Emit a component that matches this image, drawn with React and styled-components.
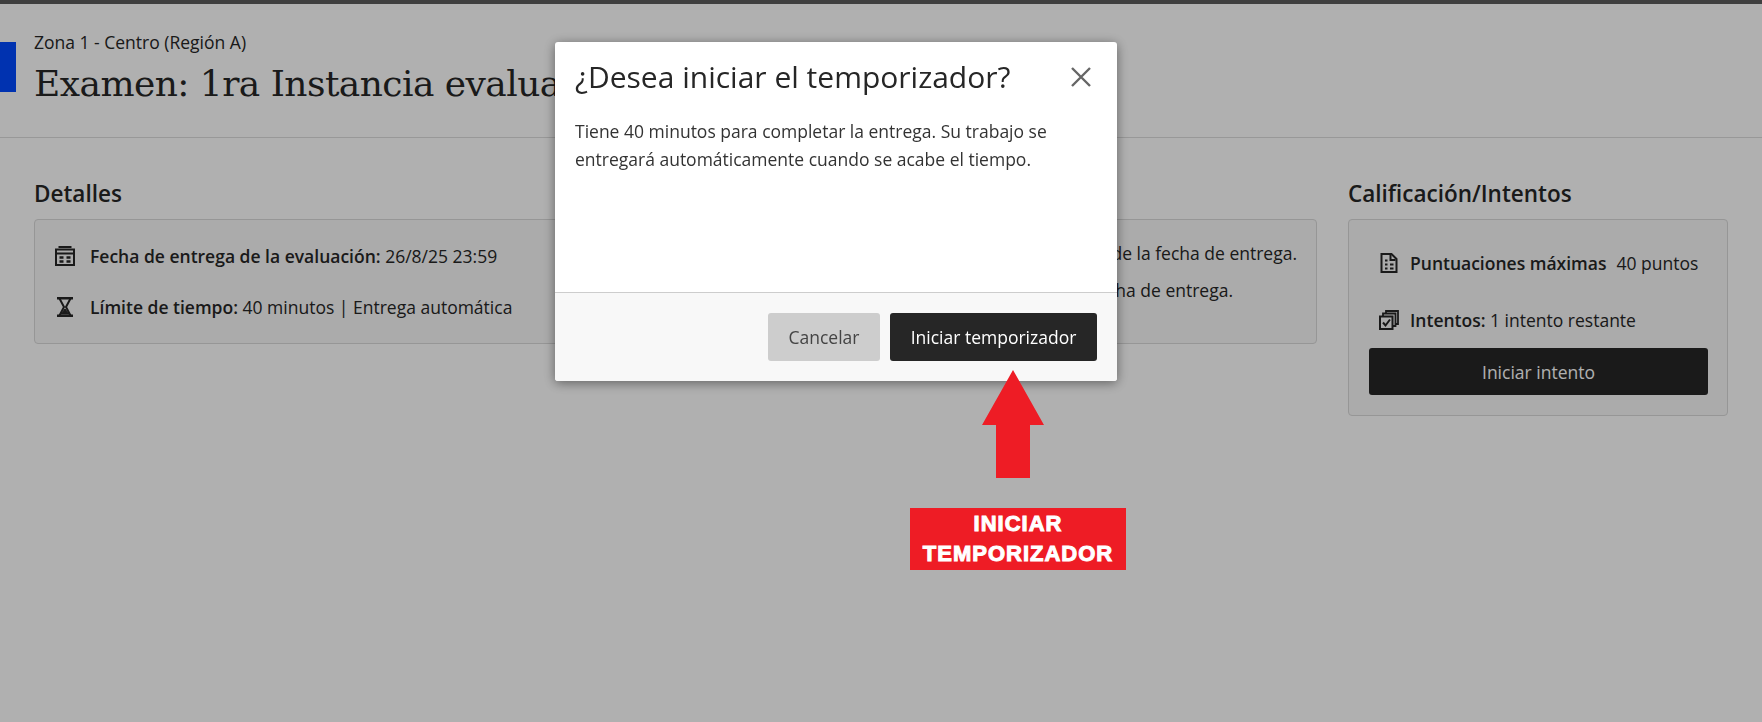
import styled, { createGlobalStyle } from "styled-components";

const GlobalStyle = createGlobalStyle`
html, body {
  margin: 0;
  padding: 0;
  background: #fff;
  font-family: "Open Sans", "Liberation Sans", sans-serif;
  color: #262626;
  overflow: hidden;
}
* { box-sizing: border-box; }
`;

const Page = styled.div`
height: 722px;
border-top: 4px solid #5c5c5c;
`;
const Header = styled.header`
display: flex;
align-items: flex-start;
gap: 18px;
height: 134px;
border-bottom: 1px solid #dcdcdc;
`;
const BackTab = styled.div`
width: 16px;
height: 50px;
margin-top: 38px;
background: #0049ff;
`;
const HeaderText = styled.div`
padding-top: 27px;
`;
const Zone = styled.div`
font-size: 17.5px;
line-height: 22px;
`;
const Title = styled.h1`
margin: 7px 0 0;
font-family: "DejaVu Serif", serif;
font-weight: 400;
font-size: 36px;
letter-spacing: -0.55px;
line-height: 48px;
white-space: nowrap;
`;
const Columns = styled.main`
display: grid;
grid-template-columns: 620px 632px 380px;
column-gap: 31px;
padding: 39px 34px 0;
align-items: start;
`;
const SectionTitle = styled.h2`
margin: 0;
height: 42px;
font-size: 22.5px;
line-height: 33px;
font-weight: 600;
min-height: 42px;
`;
const Card = styled.div`
border: 1px solid #d9d9d9;
border-radius: 4px;
background: #f8f8f8;
`;
const DetailsList = styled(Card)`
height: 125px;
padding: 22px 20px 0;
display: flex;
flex-direction: column;
gap: 23px;
`;
const MiddleList = styled(Card)`
height: 125px;
padding-top: 22px;
display: flex;
flex-direction: column;
gap: 15px;
`;
const MiddleRow = styled.div`
font-size: 17.5px;
line-height: 22px;
white-space: nowrap;
text-align: right;
padding-right: ${(p) => p.$end}px;
`;
const Row = styled.div`
display: flex;
align-items: center;
gap: 15px;
height: 28px;
font-size: 17.5px;
white-space: nowrap;
`;
const Icon = styled.svg`
flex: none;
width: 20px;
height: 20px;
fill: none;
stroke: #262626;
`;
const Label = styled.strong`
font-weight: 600;
`;
const AttemptsCard = styled(Card)`
height: 197px;
padding: 29px 20px 0;
`;
const AttemptRow = styled(Row)`
padding-left: 10px;
gap: 11px;
margin-bottom: ${(p) => p.$after}px;
`;
const Space = styled.span`
margin-left: 10px;
`;
const StartAttempt = styled.button`
display: block;
width: 339px;
height: 47px;
border: 0;
border-radius: 3px;
background: #262626;
color: #fff;
font-family: inherit;
font-size: 17.5px;
`;

const Overlay = styled.div`
position: fixed;
inset: 0;
background: rgba(0, 0, 0, 0.31);
padding: 42px 0 0 555px;
`;
const Modal = styled.div`
width: 562px;
height: 339px;
display: flex;
flex-direction: column;
background: #fff;
border-radius: 3px;
box-shadow: 0 2px 12px rgba(0, 0, 0, 0.45);
overflow: hidden;
`;
const ModalBody = styled.div`
flex: 1;
padding: 16px 20px 0;
`;
const ModalHead = styled.div`
display: flex;
justify-content: space-between;
align-items: center;
height: 38px;
margin-bottom: 21px;
`;
const ModalTitle = styled.h2`
margin: 0;
font-size: 30px;
font-weight: 400;
line-height: 38px;
white-space: nowrap;
`;
const CloseIcon = styled.svg`
width: 22px;
height: 22px;
margin-right: 5px;
stroke: #666;
stroke-width: 2.4;
fill: none;
`;
const ModalText = styled.p`
margin: 0;
font-size: 17.5px;
line-height: 28px;
width: 500px;
color: #333;
`;
const ModalFooter = styled.div`
height: 89px;
display: flex;
justify-content: flex-end;
gap: 10px;
padding: 20px 20px 0;
background: #f8f8f8;
border-top: 1px solid #cdcdcd;
`;
const FooterButton = styled.button`
height: 48px;
border: 0;
border-radius: 3px;
width: ${(p) => p.$w}px;
background: ${(p) => (p.$dark ? "#262626" : "#cdcdcd")};
color: ${(p) => (p.$dark ? "#fff" : "#444")};
font-family: inherit;
font-size: 17.5px;
`;
const Arrow = styled.svg`
position: absolute;
left: 982px;
top: 370px;
width: 62px;
height: 108px;
fill: #ee1c25;
`;
const Callout = styled.div`
position: absolute;
left: 910px;
top: 508px;
width: 216px;
height: 62px;
padding-top: 1px;
background: #ee1c25;
color: #fff;
text-align: center;
font-family: "Liberation Sans", Arial, sans-serif;
font-weight: 700;
font-size: 22px;
line-height: 30px;
letter-spacing: 1px;
-webkit-text-stroke: 1px #fff;
`;

function CalendarIcon() {
  return (
    <Icon viewBox="0 0 20 20">
      <path d="M3.5 1h13" strokeWidth="2" />
      <path d="M1 3.5h18v15.5H1z" strokeWidth="2" />
      <path d="M1 7.5h18" strokeWidth="2" />
      <path d="M4.5 11.5h4M11.5 11.5h4M4.5 15.500h4M11.5 15.500h4" strokeWidth="2.4" />
    </Icon>
  );
}
function HourglassIcon() {
  return (
    <Icon viewBox="0 0 20 20">
      <path d="M2 1.2h16M2 18.8h16" strokeWidth="2.4" />
      <path d="M4.5 1.5L9 10l-4.5 8.5M15.5 1.5L11 10l4.5 8.5" strokeWidth="2" />
      <path d="M6 17l4-5 4 5z" fill="#262626" strokeWidth="1" />
    </Icon>
  );
}
function ScoreIcon() {
  return (
    <Icon viewBox="0 0 20 20">
      <path d="M2.5 1h10l5 5v13h-15z" strokeWidth="2" />
      <path d="M6 7.5h2.500M6 11.5h2.500M6 15.500h2.500M11 11.5h3.500M11 15.500h3.500M11.5 2v5h5" strokeWidth="2" />
    </Icon>
  );
}
function AttemptsIcon() {
  return (
    <Icon viewBox="0 0 20 20">
      <path d="M1 6.5h12.500V19H1z" strokeWidth="2" />
      <path d="M4 6V3.500h12.500V16H14M7 3V1h12v13h-2.500" strokeWidth="1.8" />
      <path d="M4 12.500l2.500 3L11 9.500" strokeWidth="2" />
    </Icon>
  );
}

export default function App() {
  return (
    <>
      <GlobalStyle />
      <Page>
        <Header>
          <BackTab />
          <HeaderText>
            <Zone>Zona 1 - Centro (Región A)</Zone>
            <Title>Examen: 1ra Instancia evaluativa</Title>
          </HeaderText>
        </Header>
        <Columns>
          <section>
            <SectionTitle>Detalles</SectionTitle>
            <DetailsList>
              <Row>
                <CalendarIcon />
                <span><Label>Fecha de entrega de la evaluación:</Label> 26/8/25 23:59</span>
              </Row>
              <Row>
                <HourglassIcon />
                <span><Label>Límite de tiempo:</Label> 40 minutos | Entrega automática</span>
              </Row>
            </DetailsList>
          </section>
          <section>
            <SectionTitle />
            <MiddleList>
              <MiddleRow $end={19}>No se aceptan entregas después de la fecha de entrega.</MiddleRow>
              <MiddleRow $end={83}>Se califica después de la fecha de entrega.</MiddleRow>
            </MiddleList>
          </section>
          <section>
            <SectionTitle>Calificación/Intentos</SectionTitle>
            <AttemptsCard>
              <AttemptRow $after={29}>
                <ScoreIcon />
                <span><Label>Puntuaciones máximas</Label><Space>40 puntos</Space></span>
              </AttemptRow>
              <AttemptRow $after={14}>
                <AttemptsIcon />
                <span><Label>Intentos:</Label> 1 intento restante</span>
              </AttemptRow>
              <StartAttempt>Iniciar intento</StartAttempt>
            </AttemptsCard>
          </section>
        </Columns>
      </Page>
      <Overlay>
        <Modal>
          <ModalBody>
            <ModalHead>
              <ModalTitle>¿Desea iniciar el temporizador?</ModalTitle>
              <CloseIcon viewBox="0 0 22 22">
                <path d="M2 2l18 18M20 2L2 20" />
              </CloseIcon>
            </ModalHead>
            <ModalText>
              Tiene 40 minutos para completar la entrega. Su trabajo se entregará automáticamente cuando se acabe el tiempo.
            </ModalText>
          </ModalBody>
          <ModalFooter>
            <FooterButton $w={112}>Cancelar</FooterButton>
            <FooterButton $w={207} $dark>Iniciar temporizador</FooterButton>
          </ModalFooter>
        </Modal>
        <Arrow viewBox="0 0 62 108">
          <path d="M31 0L62 55H48V108H14V55H0z" />
        </Arrow>
        <Callout>
          INICIAR<br />TEMPORIZADOR
        </Callout>
      </Overlay>
    </>
  );
}
